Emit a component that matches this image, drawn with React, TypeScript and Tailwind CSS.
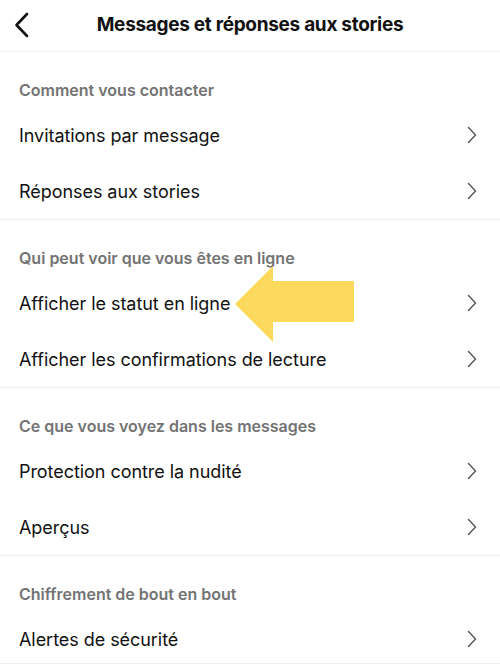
import React from "react";

const Chevron = () => (
  <svg width="12" height="18" viewBox="0 0 12 18" fill="none" className="shrink-0">
    <path d="M2.5 1.5 L9.5 9 L2.5 16.5" stroke="#5f5f5f" strokeWidth="1.6" strokeLinecap="round" strokeLinejoin="round" />
  </svg>
);

const Row = ({ label, children }: { label: string; children?: React.ReactNode }) => (
  <div className="relative flex h-[56px] items-center justify-between pl-[19px] pr-[22px]">
    <span className="text-[18px] text-[#111] tracking-[-0.05px]">{label}</span>
    {children}
    <Chevron />
  </div>
);

const Section = ({ title, items, last, arrow }: { title: string; items: string[]; last?: boolean; arrow?: boolean }) => (
  <div className={`pt-[28px] ${last ? "" : "border-b border-[#efefef]"}`}>
    <div className="h-[20px] mb-[7px] flex items-center pl-[19px] text-[16px] font-semibold text-[#737373]">{title}</div>
    {items.map((it, i) => (
      <Row key={it} label={it}>
        {arrow && i === 0 ? (
          <svg className="absolute left-[234px] top-[-9px]" width="122" height="78" viewBox="0 0 122 78">
            <polygon points="1,38 39,0 39,15 120,15 120,56 39,56 39,76" fill="#fdd95b" />
          </svg>
        ) : null}
      </Row>
    ))}
    {last ? <div className="mt-[-4px] h-px bg-[#efefef]" /> : null}
  </div>
);

export default function App() {
  return (
    <div className="w-[500px] h-[672px] overflow-hidden bg-white" style={{ fontFamily: "Inter, 'Noto Sans', sans-serif" }}>
      <div className="relative flex h-[52px] items-center justify-center border-b border-[#f2f2f2]">
        <svg className="absolute left-[13px] top-[12px]" width="18" height="26" viewBox="0 0 18 26" fill="none">
          <path d="M14 2 L3.5 13 L14 24" stroke="#111" strokeWidth="2.6" strokeLinecap="round" strokeLinejoin="round" />
        </svg>
        <span className="text-[19px] font-bold text-[#111] tracking-[-0.3px]">Messages et réponses aux stories</span>
      </div>
      <Section title="Comment vous contacter" items={["Invitations par message", "Réponses aux stories"]} />
      <Section title="Qui peut voir que vous êtes en ligne" items={["Afficher le statut en ligne", "Afficher les confirmations de lecture"]} arrow />
      <Section title="Ce que vous voyez dans les messages" items={["Protection contre la nudité", "Aperçus"]} />
      <Section title="Chiffrement de bout en bout" items={["Alertes de sécurité"]} last />
    </div>
  );
}
